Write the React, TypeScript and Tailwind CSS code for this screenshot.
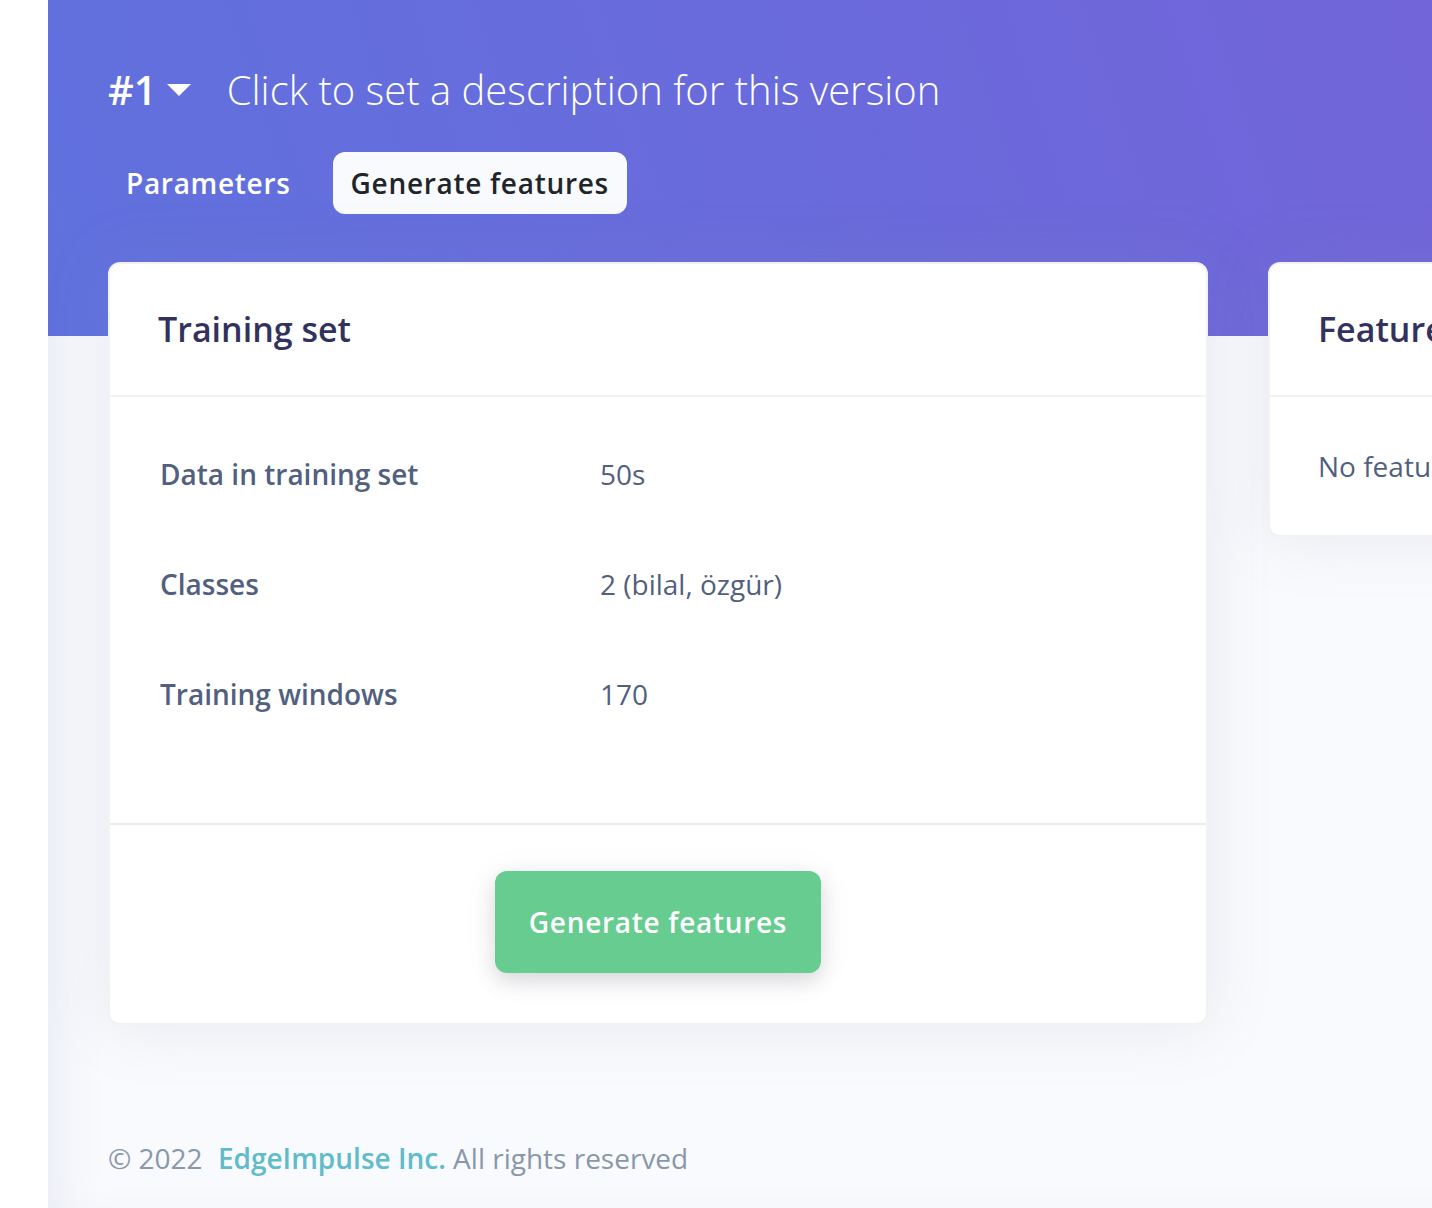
import React from "react";

const rows = [
  { label: "Data in training set", value: "50s" },
  { label: "Classes", value: "2 (bilal, özgür)" },
  { label: "Training windows", value: "170" },
];

function Card({ title, children }: { title: string; children: React.ReactNode }) {
  return (
    <section className="w-[1100px] shrink-0 rounded-xl border-2 border-[#f2f2f3] bg-white shadow-[0_0_64px_0_rgba(136,140,170,0.16)]">
      <h2 className="border-b-2 border-[#f2f2f3] px-12 py-[45px] text-[34px] leading-[41px] font-semibold whitespace-nowrap text-[#32325d]">
        {title}
      </h2>
      {children}
    </section>
  );
}

export default function App() {
  return (
    <div className="min-h-screen overflow-hidden bg-white pl-12 font-['Open_Sans',sans-serif] text-[28px] leading-[42px] text-[#525f7f]">
      <div className="min-h-screen bg-[#f9fafd] shadow-[inset_32px_0_48px_-24px_rgba(136,145,190,0.15)]">
        <header className="h-84 bg-linear-[72deg,#6071de,#7265da] pt-15 pl-15 text-white">
          <div className="flex items-center gap-9 text-[40px] leading-[60px] whitespace-nowrap">
            <button className="flex items-center gap-[10px] font-semibold">
              #1
              <svg className="h-3 w-6" viewBox="0 0 24 12" fill="currentColor" aria-hidden="true">
                <path d="M0 0h24L12 12z" />
              </svg>
            </button>
            <button className="font-light">Click to set a description for this version</button>
          </div>
          <nav className="mt-8 flex gap-6 font-semibold tracking-[0.7px]">
            <a href="#parameters" className="rounded-xl px-[18px] py-[10px]">Parameters</a>
            <a href="#features" className="rounded-xl bg-[#f9fafd] px-[18px] py-[10px] text-[#212529]">Generate features</a>
          </nav>
        </header>
        <main className="-mt-[74px] flex items-start gap-15 pl-15">
          <Card title="Training set">
            <table className="mt-[22px] mb-[74px] w-full text-left">
              <tbody>
                {rows.map((row) => (
                  <tr key={row.label} className="h-[110px]">
                    <th scope="row" className="w-[440px] pl-[50px] font-semibold">{row.label}</th>
                    <td className="pl-[50px]">{row.value}</td>
                  </tr>
                ))}
              </tbody>
            </table>
            <div className="flex justify-center border-t-2 border-[#ebebf0] pt-[46px] pb-[50px]">
              <button className="rounded-xl bg-[#66cc90] px-[34px] py-[30px] font-semibold tracking-[0.7px] text-white shadow-[0_8px_20px_rgba(50,50,73,0.15),0_4px_40px_rgba(0,0,0,0.05)]">
                Generate features
              </button>
            </div>
          </Card>
          <Card title="Feature explorer">
            <p className="px-12 py-12 whitespace-nowrap">No features generated yet.</p>
          </Card>
        </main>
        <footer className="pt-[112px] pb-7 pl-15 text-[#8898aa]">
          © 2022 <a href="#company" className="ml-2 font-semibold text-[#60bccb]">EdgeImpulse Inc.</a> All rights reserved
        </footer>
      </div>
    </div>
  );
}
